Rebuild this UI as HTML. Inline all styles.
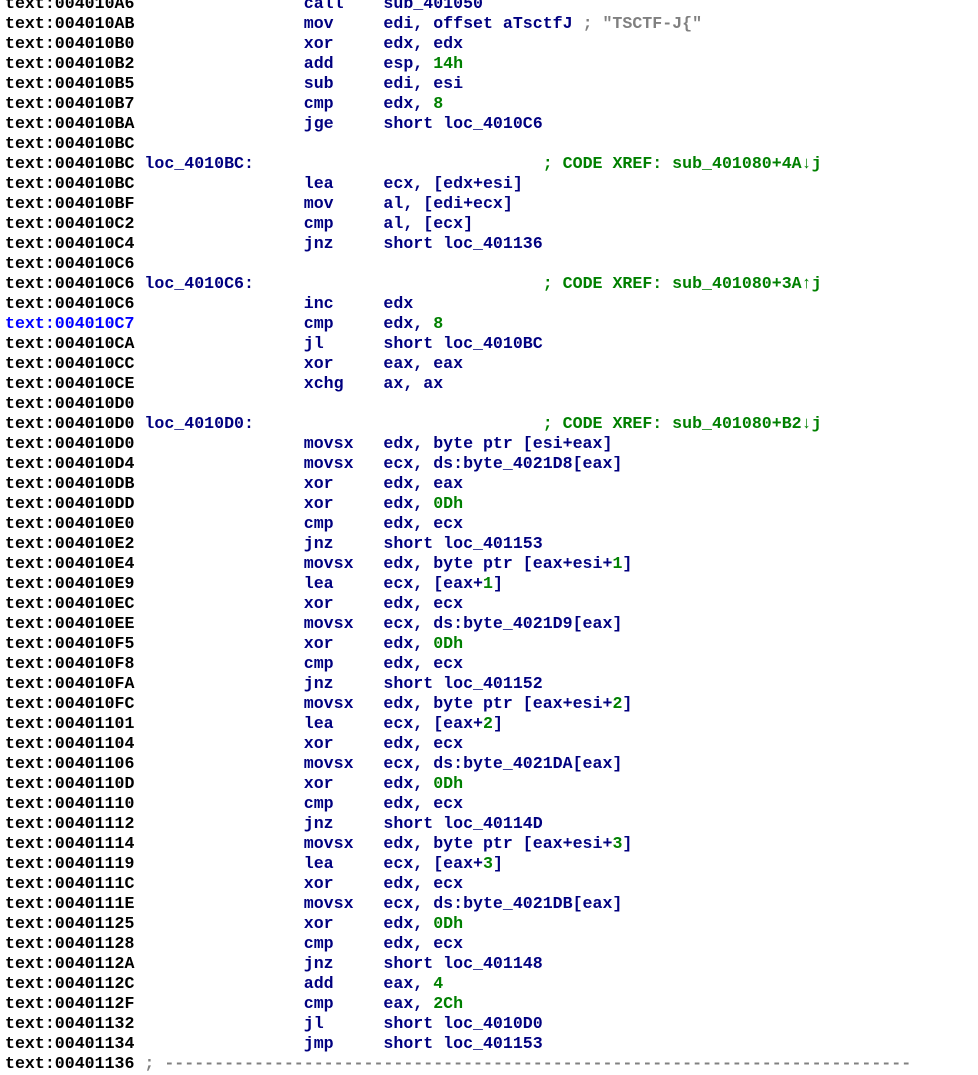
<!DOCTYPE html>
<html><head><meta charset="utf-8"><style>
html,body{margin:0;padding:0;background:#fff;width:978px;height:1075px;overflow:hidden}
pre{margin:0;position:absolute;left:5px;top:-6px;font-family:"Liberation Mono",monospace;font-size:16.6px;line-height:20px;font-weight:bold;color:#000080}
.a{color:#000}.s{color:#0000ff}.g{color:#008000}.c{color:#808080}
</style></head><body><pre><span class="a">text:004010A6</span>                 call    sub_401050
<span class="a">text:004010AB</span>                 mov     edi, offset aTsctfJ <span class="c">; "TSCTF-J{"</span>
<span class="a">text:004010B0</span>                 xor     edx, edx
<span class="a">text:004010B2</span>                 add     esp, <span class="g">14h</span>
<span class="a">text:004010B5</span>                 sub     edi, esi
<span class="a">text:004010B7</span>                 cmp     edx, <span class="g">8</span>
<span class="a">text:004010BA</span>                 jge     short loc_4010C6
<span class="a">text:004010BC</span>
<span class="a">text:004010BC</span> loc_4010BC:                             <span class="g">; CODE XREF: sub_401080+4A↓j</span>
<span class="a">text:004010BC</span>                 lea     ecx, [edx+esi]
<span class="a">text:004010BF</span>                 mov     al, [edi+ecx]
<span class="a">text:004010C2</span>                 cmp     al, [ecx]
<span class="a">text:004010C4</span>                 jnz     short loc_401136
<span class="a">text:004010C6</span>
<span class="a">text:004010C6</span> loc_4010C6:                             <span class="g">; CODE XREF: sub_401080+3A↑j</span>
<span class="a">text:004010C6</span>                 inc     edx
<span class="s">text:004010C7</span>                 cmp     edx, <span class="g">8</span>
<span class="a">text:004010CA</span>                 jl      short loc_4010BC
<span class="a">text:004010CC</span>                 xor     eax, eax
<span class="a">text:004010CE</span>                 xchg    ax, ax
<span class="a">text:004010D0</span>
<span class="a">text:004010D0</span> loc_4010D0:                             <span class="g">; CODE XREF: sub_401080+B2↓j</span>
<span class="a">text:004010D0</span>                 movsx   edx, byte ptr [esi+eax]
<span class="a">text:004010D4</span>                 movsx   ecx, ds:byte_4021D8[eax]
<span class="a">text:004010DB</span>                 xor     edx, eax
<span class="a">text:004010DD</span>                 xor     edx, <span class="g">0Dh</span>
<span class="a">text:004010E0</span>                 cmp     edx, ecx
<span class="a">text:004010E2</span>                 jnz     short loc_401153
<span class="a">text:004010E4</span>                 movsx   edx, byte ptr [eax+esi+<span class="g">1</span>]
<span class="a">text:004010E9</span>                 lea     ecx, [eax+<span class="g">1</span>]
<span class="a">text:004010EC</span>                 xor     edx, ecx
<span class="a">text:004010EE</span>                 movsx   ecx, ds:byte_4021D9[eax]
<span class="a">text:004010F5</span>                 xor     edx, <span class="g">0Dh</span>
<span class="a">text:004010F8</span>                 cmp     edx, ecx
<span class="a">text:004010FA</span>                 jnz     short loc_401152
<span class="a">text:004010FC</span>                 movsx   edx, byte ptr [eax+esi+<span class="g">2</span>]
<span class="a">text:00401101</span>                 lea     ecx, [eax+<span class="g">2</span>]
<span class="a">text:00401104</span>                 xor     edx, ecx
<span class="a">text:00401106</span>                 movsx   ecx, ds:byte_4021DA[eax]
<span class="a">text:0040110D</span>                 xor     edx, <span class="g">0Dh</span>
<span class="a">text:00401110</span>                 cmp     edx, ecx
<span class="a">text:00401112</span>                 jnz     short loc_40114D
<span class="a">text:00401114</span>                 movsx   edx, byte ptr [eax+esi+<span class="g">3</span>]
<span class="a">text:00401119</span>                 lea     ecx, [eax+<span class="g">3</span>]
<span class="a">text:0040111C</span>                 xor     edx, ecx
<span class="a">text:0040111E</span>                 movsx   ecx, ds:byte_4021DB[eax]
<span class="a">text:00401125</span>                 xor     edx, <span class="g">0Dh</span>
<span class="a">text:00401128</span>                 cmp     edx, ecx
<span class="a">text:0040112A</span>                 jnz     short loc_401148
<span class="a">text:0040112C</span>                 add     eax, <span class="g">4</span>
<span class="a">text:0040112F</span>                 cmp     eax, <span class="g">2Ch</span>
<span class="a">text:00401132</span>                 jl      short loc_4010D0
<span class="a">text:00401134</span>                 jmp     short loc_401153
<span class="a">text:00401136</span> <span class="c">; ---------------------------------------------------------------------------</span>
</pre></body></html>
